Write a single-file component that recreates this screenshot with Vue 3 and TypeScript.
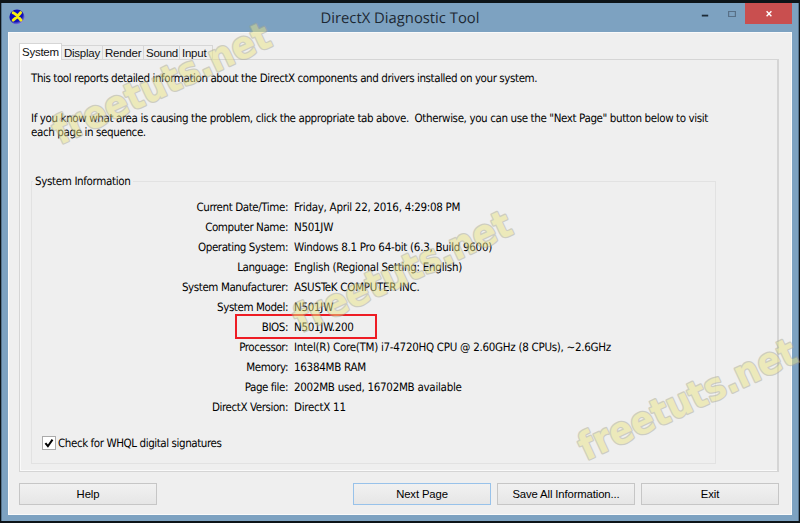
<script setup lang="ts">
import { ref } from 'vue'

interface InfoRow {
  label: string
  value: string
  marked?: boolean
}

const tabs: string[] = ['System', 'Display', 'Render', 'Sound', 'Input']
const active = ref('System')
const whql = ref(true)

const rows: InfoRow[] = [
  { label: 'Current Date/Time:', value: 'Friday, April 22, 2016, 4:29:08 PM' },
  { label: 'Computer Name:', value: 'N501JW' },
  { label: 'Operating System:', value: 'Windows 8.1 Pro 64-bit (6.3, Build 9600)' },
  { label: 'Language:', value: 'English (Regional Setting: English)' },
  { label: 'System Manufacturer:', value: 'ASUSTeK COMPUTER INC.' },
  { label: 'System Model:', value: 'N501JW' },
  { label: 'BIOS:', value: 'N501JW.200', marked: true },
  { label: 'Processor:', value: 'Intel(R) Core(TM) i7-4720HQ CPU @ 2.60GHz (8 CPUs), ~2.6GHz' },
  { label: 'Memory:', value: '16384MB RAM' },
  { label: 'Page file:', value: '2002MB used, 16702MB available' },
  { label: 'DirectX Version:', value: 'DirectX 11' },
]

const stamps = [
  { x: 60, y: 145 },
  { x: 301, y: 333 },
  { x: 586, y: 461 },
]
</script>

<template>
  <div class="desktop">
    <div class="window">
      <header class="titlebar">
        <svg class="app-icon" viewBox="0 0 16 16">
          <defs>
            <radialGradient id="orb" cx="0.4" cy="0.35" r="0.7">
              <stop offset="0" stop-color="#0a0ad0" />
              <stop offset="0.65" stop-color="#1010b4" />
              <stop offset="1" stop-color="#a8a8e4" />
            </radialGradient>
          </defs>
          <circle cx="8" cy="8" r="7.6" fill="url(#orb)" />
          <path d="M4.2 3.8C7 4.6 9.4 8 12 11.2M11.6 3.6C9.6 6.4 7 9 4.2 11.2" fill="none" stroke="#f6ee10" stroke-width="2.9" stroke-linecap="round" />
        </svg>
        <h1 class="title">DirectX Diagnostic Tool</h1>
        <div class="controls">
          <span class="control"><svg viewBox="0 0 8 8"><path d="M.8 5.6h6.4" stroke="#1d2b37" stroke-width="1.8" /></svg></span>
          <span class="control"><svg viewBox="0 0 8 8"><path d="M.6 1.5h6.8v5H.6z" fill="none" stroke="#587087" stroke-width="1.2" /></svg></span>
          <span class="control close"><svg viewBox="0 0 8 8"><path d="M1.6 1.3l4.8 4.9M6.4 1.3L1.6 6.2" stroke="#fff" stroke-width="1.4" /></svg></span>
        </div>
      </header>

      <main class="client">
        <nav class="tabs">
          <button v-for="t in tabs" :key="t" class="tab" :class="[t.toLowerCase(), { active: t === active }]" @click="active = t">{{ t }}</button>
        </nav>
        <section class="page">
          <p class="intro">This tool reports detailed information about the DirectX components and drivers installed on your system.</p>
          <p class="hint">If you know what area is causing the problem, click the appropriate tab above.&nbsp; Otherwise, you can use the "Next Page" button below to visit<br>each page in sequence.</p>
          <fieldset class="group">
            <legend>System Information</legend>
            <dl class="rows">
              <div v-for="r in rows" :key="r.label" class="row">
                <dt>{{ r.label }}</dt>
                <dd>{{ r.value }}</dd>
                <span v-if="r.marked" class="mark"></span>
              </div>
            </dl>
            <label class="check" @click="whql = !whql">
              <span class="box"><svg v-if="whql" viewBox="0 0 12 12"><path d="M2.4 6.2l2.5 3L9.5 2.6" fill="none" stroke="#000" stroke-width="2" /></svg></span>
              <span>Check for WHQL digital signatures</span>
            </label>
          </fieldset>
        </section>
        <footer class="actions">
          <button class="btn help">Help</button>
          <button class="btn primary">Next Page</button>
          <button class="btn">Save All Information...</button>
          <button class="btn">Exit</button>
        </footer>
      </main>
    </div>

    <svg class="stamps" viewBox="0 0 800 523">
      <g v-for="s in stamps" :key="s.x" :transform="`translate(${s.x} ${s.y}) rotate(-25)`">
        <text class="face" textLength="236" lengthAdjust="spacingAndGlyphs">freetuts.net</text>
      </g>
    </svg>
  </div>
</template>

<style>
body {
  margin: 0;
  overflow: hidden;
}
</style>

<style scoped>
* {
  box-sizing: border-box;
}
.desktop {
  position: relative;
  width: 800px;
  height: 523px;
  padding: 3px 1px 2px 1px;
  background: #0d1418;
  overflow: hidden;
  text-rendering: geometricPrecision;
}
.window {
  height: 518px;
  padding: 0 6px;
  border-left: 1px solid #57748d;
  border-right: 1px solid #57748d;
  background: #7da2c1;
}
.titlebar {
  display: flex;
  height: 29px;
}
.app-icon {
  width: 16px;
  height: 16px;
  margin: 6px 0 0 0.5px;
}
.title {
  margin: 0 auto 0 296px;
  font: 400 14.8px/30px "Open Sans", sans-serif;
  color: #1c2833;
  white-space: nowrap;
}
.controls {
  display: flex;
}
.control {
  width: 27px;
  height: 21px;
  display: flex;
  align-items: center;
  justify-content: center;
}
.control svg {
  width: 8px;
  height: 8px;
}
.close {
  width: 47px;
  background: #c94f4f;
}
.client {
  height: 483px;
  padding: 10px 12px 0 10px;
  border: 1px solid #fafafa;
  background: #efefef;
}
.tabs {
  display: flex;
  align-items: flex-end;
  height: 16px;
}
.tab {
  height: 14px;
  padding: 0 0 0 2px;
  border: 1px solid #d6d6d6;
  border-width: 1px 1px 0 0;
  background: #efefef;
  font: 11.5px/14px "Liberation Sans", sans-serif;
  letter-spacing: -0.25px;
  text-align: left;
  color: #111;
  white-space: nowrap;
}
.tab.active {
  height: 17px;
  margin-bottom: -1px;
  border-left-width: 1px;
  background: #fff;
  position: relative;
  z-index: 1;
}
.system { width: 43px; }
.display { width: 41px; }
.render { width: 41px; }
.sound { width: 36px; }
.input { width: 33px; }
.page {
  width: 760px;
  height: 413px;
  padding: 12px 0 0 11px;
  border: 1px solid #d5d5d5;
  border-right-width: 2px;
  box-shadow: inset 1px -1px #fafafa;
  font: 11.5px/13px "DejaVu Sans Condensed", "DejaVu Sans", sans-serif;
  font-stretch: condensed;
  letter-spacing: -0.42px;
  color: #000;
}
p {
  margin: 0;
  white-space: nowrap;
}
.hint {
  margin-top: 27px;
  line-height: 13.5px;
  letter-spacing: -0.385px;
}
.group {
  width: 685px;
  height: 289px;
  margin: 36px 0 0;
  padding: 0;
  border: 1px solid #e2e2e2;
}
.group legend {
  margin-left: 1px;
  padding: 0 3px 0 2px;
  letter-spacing: -0.35px;
}
.rows {
  margin: 9px 0 0;
}
.row {
  position: relative;
  display: flex;
  height: 20px;
  line-height: 20px;
  white-space: nowrap;
}
dt {
  width: 256px;
  text-align: right;
}
dd {
  margin: 0 0 0 6px;
  letter-spacing: -0.28px;
}
.mark {
  position: absolute;
  left: 203px;
  top: -3px;
  width: 142px;
  height: 25px;
  border: 2px solid #ee1c24;
}
.check {
  display: flex;
  align-items: center;
  gap: 2px;
  margin: 19px 0 0 10px;
  height: 14px;
}
.box {
  width: 14px;
  height: 14px;
  border: 1px solid #aaa;
  background: #fff;
}
.box svg {
  display: block;
  width: 12px;
  height: 12px;
}
.actions {
  display: flex;
  gap: 6px;
  margin-top: 11px;
}
.btn {
  flex: none;
  width: 138px;
  height: 22px;
  padding: 0;
  border: 1px solid #c6c6c6;
  background: linear-gradient(#f1f1f1, #e6e6e6);
  font: 11.3px/20px "Liberation Sans", sans-serif;
  letter-spacing: -0.12px;
  color: #000;
}
.help {
  margin-right: 190px;
}
.primary {
  border-color: #98c2ea;
}
.stamps {
  position: absolute;
  inset: 0;
  width: 800px;
  height: 523px;
  pointer-events: none;
}
.face {
  font: 700 38px "DejaVu Sans", sans-serif;
  fill: #e9e382;
  stroke: #a9a990;
  stroke-width: 2.6px;
  stroke-linejoin: round;
  paint-order: stroke;
  opacity: 0.48;
}
</style>
